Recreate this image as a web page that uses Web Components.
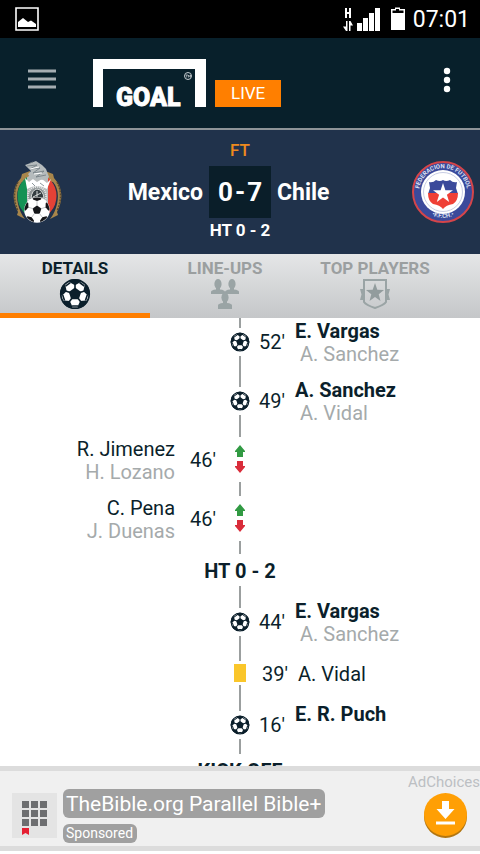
<!DOCTYPE html>
<html lang="en">
<head>
<meta charset="utf-8">
<meta name="viewport" content="width=device-width, initial-scale=1">
<title>Goal Live</title>
<style>
  html, body { height: 100%; }
  body {
    margin: 0;
    background: #fff;
    color: #0b1f2b;
    font-family: Roboto, "Liberation Sans", sans-serif;
    overflow: hidden;
  }
</style>
</head>
<body>
<goal-app></goal-app>

<script>
class GoalElement extends HTMLElement {
  constructor() {
    super();
    this.attachShadow({ mode: 'open' });
  }

  connectedCallback() {
    this.shadowRoot.innerHTML = this.render();
  }
}

const TURNS = [0, 72, 144, 216, 288];

class SoccerBall extends GoalElement {
  render() {
    const dark = '#0b1f2b';
    const parts = TURNS.map(a => `
      <g transform="rotate(${a})">
        <path d="M0-5V-10" stroke="${dark}" stroke-width="1.6"/>
        <path d="M0-8.800L-5-11.600-6.200-16H6.200L5-11.600Z" fill="${dark}"/>
        <path d="M4.600-11.500L9.400-8" stroke="${dark}" stroke-width="1.600"/>
      </g>`).join('');
    return `
      <style>
        :host { display: block; width: var(--ball, 20px); height: var(--ball, 20px); }
        svg { display: block; width: 100%; height: 100%; }
      </style>
      <svg viewBox="-16 -16 32 32" aria-hidden="true">
        <defs><clipPath id="rim"><circle r="15"/></clipPath></defs>
        <circle r="14.500" fill="#fff"/>
        <path d="M0-6.500L6.200-2 3.800 5.300H-3.800L-6.200-2Z" fill="${dark}"/>
        <g clip-path="url(#rim)">${parts}</g>
        <circle r="14.200" fill="none" stroke="${dark}" stroke-width="1.800"/>
      </svg>`;
  }
}

class StatusBar extends GoalElement {
  render() {
    return `
      <style>
        :host { display: flex; align-items: center; height: 38px; padding: 0 10px 0 15px; background: #000; color: #fff; }
        .right { display: flex; align-items: center; margin-left: auto; }
        svg { display: block; }
        time { margin-left: 8px; padding-top: 2px; font-size: 23px; line-height: 28px; }
      </style>
      <svg width="24" height="24" viewBox="0 0 24 24" aria-hidden="true">
        <path d="M1 1H23V23H1Z" fill="none" stroke="#fff" stroke-width="1.6"/>
        <path d="M3 20V15L8 11 13 15 16 13.5 21 17V20Z" fill="#fff"/>
      </svg>
      <div class="right">
        <svg width="62" height="26" viewBox="0 0 62 26" fill="#fff" aria-hidden="true">
          <path d="M2 2H4V6H6V2H8V12H6V8H4V12H2Z"/>
          <path d="M3 15H4.500V25H3L0 20.500H3ZM6 15H7.500L10 19.500H7.500V25H6Z"/>
          <path d="M14 17H19V25H14ZM20 12H25V25H20ZM26 7H31V25H26ZM32 2H37V25H32Z"/>
          <path d="M48 3H52V1.500H57V3H62V24H48Z"/>
          <path d="M49.500 4.500H53V3H56V4.500H60.500V7H49.500Z" fill="#000"/>
        </svg>
        <time>07:01</time>
      </div>`;
  }
}

class AppHeader extends GoalElement {
  render() {
    return `
      <style>
        :host { display: flex; align-items: flex-start; height: 69px; padding: 21px 20px 0 28px; background: #08202b; border-bottom: 2px solid #8e9498; }
        button { padding: 0; border: 0; background: none; cursor: pointer; }
        svg { display: block; }
        .menu { margin-top: 9px; }
        .logo { margin-left: 37px; }
        .live { margin: 21px 0 0 9px; padding: 0 16px; background: #ff7f00; color: #fff; font-size: 17px; line-height: 27px; text-decoration: none; }
        .more { margin: 6px 0 0 auto; }
      </style>
      <button class="menu" aria-label="Menu">
        <svg width="28" height="24" viewBox="0 0 28 24"><path d="M0 3H28M0 11H28M0 19H28" stroke="#a5adb2" stroke-width="3"/></svg>
      </button>
      <svg class="logo" width="113" height="52" viewBox="0 0 113 52" fill="#fff">
        <path d="M0 48V0H113V48H102V10H10V48Z"/>
        <text x="23" y="47" font-family="Roboto, sans-serif" font-size="25" font-weight="900" stroke="#fff" stroke-width=".8">GOAL</text>
        <circle cx="95" cy="17" r="3.500" fill="none" stroke="#c5ccd0"/>
        <path d="M92.500 16H95M93.700 16V18.500M95.500 18.500V16L96.500 17.500 97.500 16V18.500" stroke="#c5ccd0" stroke-width=".7" fill="none"/>
      </svg>
      <a class="live" href="#live">LIVE</a>
      <button class="more" aria-label="More options">
        <svg width="26" height="30" viewBox="0 0 26 30" fill="#fff"><circle cx="13" cy="6" r="3.200"/><circle cx="13" cy="15" r="3.200"/><circle cx="13" cy="24" r="3.200"/></svg>
      </button>`;
  }
}

class MexicoCrest extends GoalElement {
  render() {
    const patches = TURNS.map(a => `
      <g transform="rotate(${a})">
        <path d="M0-4V-9" stroke="#b9bcbe" stroke-width=".8"/>
        <path d="M0-9L-4-10.500-5-14H5L4-10.500Z"/>
      </g>`).join('');
    return `
      <style>
        :host { display: block; }
        svg { display: block; }
      </style>
      <svg width="50" height="62" viewBox="0 0 50 62" role="img" aria-label="Mexico">
        <defs>
          <clipPath id="rim"><circle r="12.500"/></clipPath>
          <clipPath id="oval"><ellipse cx="24" cy="35" rx="19.500" ry="22"/></clipPath>
        </defs>
        <path d="M9 13L17 10V20L9 21Q2 29 5 43 7 52 12 58L4 54 5 51Q-5 31 8 17Z" fill="#a8864b"/>
        <path d="M40 13L32 10V20L40 21Q47 29 44 43 42 52 37 58L45 54 44 51Q54 31 41 17Z" fill="#a8864b"/>
        <path d="M5 21Q-2 34 5 50M44 21Q51 34 44 50" fill="none" stroke="#5a4a30" stroke-width="1.500" stroke-dasharray="2 1"/>
        <g clip-path="url(#oval)">
          <path d="M4 12H14V58H4Z" fill="#149254"/>
          <path d="M14 12H35V58H14Z" fill="#b9bcbc"/>
          <path d="M35 12H45V58H35Z" fill="#e44236"/>
        </g>
        <path d="M12 17L16 21 20 18 24 21 29 18 34 22 38 18 34 28Q24 22 14 28Z" fill="#fff"/>
        <path d="M12 4L23 0 29 4 33 8 36 16 33 19 18 18 15 13 18 10Z" fill="#b5bbbd"/>
        <path d="M14 5L24 4 17 8 27 7 20 12 31 10 23 16 33 14M19 22L22 25M27 22L31 25M17 2L20 1" fill="none" stroke="#707b82" stroke-width=".8"/>
        <path d="M17 8L26 6M21 13L29 12M17 23L20 21 23 23 27 21" fill="none" stroke="#fff"/>
        <circle cx="24" cy="35" r="9" fill="#8e9495"/>
        <circle cx="24" cy="35" r="9" fill="none" stroke="#e6e8e8" stroke-width="2" stroke-dasharray="1 1"/>
        <path d="M18 37Q19 29 24 28 30 29 31 37ZM24 30V38M20 36L28 32" fill="#333c40" stroke="#d8dbda"/>
        <g transform="translate(24 49)" fill="#151619">
          <circle r="12.800" fill="#fff"/>
          <path d="M0-4.600L4.400-1.400 2.700 3.700H-2.700L-4.400-1.400Z"/>
          <g clip-path="url(#rim)">${patches}</g>
        </g>
      </svg>`;
  }
}

class ChileCrest extends GoalElement {
  render() {
    return `
      <style>
        :host { display: block; }
        svg { display: block; }
        text { font: bold 6px Roboto, sans-serif; fill: #dfe2f2; }
      </style>
      <svg width="62" height="62" viewBox="0 0 62 62" role="img" aria-label="Chile">
        <defs>
          <path id="top" d="M7.500 36A24 24 0 1 1 54.500 36"/>
          <path id="bottom" d="M14 50.500A26 26 0 0 0 48 50.500"/>
        </defs>
        <circle cx="31" cy="31" r="30" fill="#3b4a9b" stroke="#d5454a" stroke-width="2"/>
        <circle cx="31" cy="31" r="22" fill="#fff"/>
        <circle cx="31" cy="31" r="19.500" fill="none" stroke="#c8cde4" stroke-width="1"/>
        <path d="M17 21Q21 22 24 19 28 21 31 19 34 21 38 19 41 22 45 21L44 27 46 33H16L18 27Z" fill="#3b4a9b"/>
        <path d="M16 32H46Q46 40 41 43 34 44 31 48 28 44 21 43 16 40 16 32Z" fill="#ef4036"/>
        <path d="M31 22L33.400 29.300H41L34.900 33.800 37.200 41 31 36.500 24.800 41 27.100 33.800 21 29.300H28.600Z" fill="#fff"/>
        <text><textPath href="#top" startOffset="50%" text-anchor="middle">FEDERACION DE FUTBOL</textPath></text>
        <text><textPath href="#bottom" startOffset="50%" text-anchor="middle">•F.F.CH.•</textPath></text>
      </svg>`;
  }
}

class MatchScore extends GoalElement {
  render() {
    return `
      <style>
        :host { display: flex; align-items: center; justify-content: space-between; height: 124px; padding: 0 6px 0 13px; background: #20324b; color: #fff; }
        .centre { flex: 1; display: flex; flex-direction: column; align-items: center; margin-left: 5px; padding-bottom: 2px; font-weight: 500; }
        .status { color: #ee8a1d; font-size: 17px; line-height: 20px; }
        .half { font-size: 17px; font-weight: 700; line-height: 24px; }
        .line { display: grid; grid-template-columns: 1fr auto 1fr; align-items: center; column-gap: 6px; width: 100%; margin-top: 6px; font-size: 23px; font-weight: 700; }
        .home { text-align: right; }
        .score { display: flex; justify-content: center; gap: 2px; min-width: 62px; background: #0a1e29; font-size: 26px; line-height: 52px; }
      </style>
      <mexico-crest></mexico-crest>
      <div class="centre">
        <div class="status">FT</div>
        <div class="line">
          <span class="home">Mexico</span>
          <span class="score"><span>0</span><span>-</span><span>7</span></span>
          <span class="away">Chile</span>
        </div>
        <div class="half">HT 0 - 2</div>
      </div>
      <chile-crest></chile-crest>`;
  }
}

class MatchTabs extends GoalElement {
  render() {
    return `
      <style>
        :host { display: block; }
        nav { display: grid; grid-template-columns: 5fr 5fr 5fr 1fr; height: 64px; background: linear-gradient(#e5e6e7, #c5c7c9); }
        button { display: flex; flex-direction: column; align-items: center; padding: 4px 0 0; border: 0; border-bottom: 5px solid transparent; background: none; color: #9b9fa0; font: 700 17px/20px Roboto, sans-serif; cursor: pointer; }
        .active { border-color: #ff7f00; color: #0b1f2b; }
        soccer-ball { --ball: 32px; }
        svg { display: block; }
      </style>
      <nav>
        <button class="active">DETAILS<soccer-ball></soccer-ball></button>
        <button>LINE-UPS
          <svg width="30" height="32" viewBox="0 0 30 32" fill="#9aa4a5" aria-hidden="true">
            <g id="man"><ellipse cx="8" cy="6" rx="3.600" ry="5"/><path d="M6 9H10V11.500Q15 12 15 14V16H1V14Q1 12 6 11.500Z"/></g>
            <use href="#man" x="14"/>
            <ellipse cx="15" cy="19.500" rx="3.600" ry="4.800"/><path d="M13 22H17V25Q22 25.500 22 27.500V31H8V27.500Q8 25.500 13 25Z"/>
          </svg>
        </button>
        <button>TOP PLAYERS
          <svg width="30" height="32" viewBox="0 0 30 32" aria-hidden="true">
            <path d="M4 2H26V24Q24 27 15 30 6 27 4 24Z" fill="none" stroke="#9aa4a5" stroke-width="2"/>
            <path d="M0 11H3V22H0L1.500 16.500ZM30 11H27V22H30L28.500 16.500Z" fill="#9aa4a5"/>
            <path d="M15 5L17.300 11.700 24 12 18.700 16.200 20.500 23 15 19 9.500 23 11.300 16.200 6 12 12.700 11.700Z" fill="#929c9d"/>
          </svg>
        </button>
      </nav>`;
  }
}

class MatchEvent extends GoalElement {
  icon() {
    switch (this.getAttribute('kind')) {
      case 'goal':
        return '<soccer-ball></soccer-ball>';
      case 'sub':
        return `<svg width="10" height="29" viewBox="0 0 10 29" aria-hidden="true">
          <path d="M5 0L10 6V7H8V12H2V7H0V6Z" fill="#319a43"/>
          <path d="M2 16H8V21H10V22L5 28 0 22V21H2Z" fill="#d92c3a"/></svg>`;
      case 'card':
        return '<div class="yellow"></div>';
      default:
        return '<slot></slot>';
    }
  }

  render() {
    const minute = this.getAttribute('minute');
    const time = minute ? `<span class="time">${minute}'</span>` : '';
    const names = minute ? '<div class="names"><slot></slot><slot name="other"></slot></div>' : '';
    return `
      <style>
        :host { display: grid; grid-template-columns: 1fr auto 1fr; height: 59px; font-size: 20px; line-height: 23px; }
        .track { grid-column: 2; grid-row: 1; display: flex; flex-direction: column; align-items: center; min-width: 20px; }
        .track::before, .track::after { content: ""; flex: 1; width: 2px; background: #9b9f9f; }
        .mark { padding: 4px 0; }
        .side { grid-column: 3; grid-row: 1; display: flex; align-items: center; gap: 10px; padding: 2px 0 0 9px; white-space: nowrap; }
        .names { display: flex; flex-direction: column; height: 46px; }
        ::slotted([slot="other"]) { padding: 0 5px; color: #a5aaab; font-weight: 400; }
        :host([kind="goal"]) .names { font-weight: 700; }
        :host([kind="sub"]) .mark { padding: 8px 0; }
        :host([kind="card"]), :host([kind="period"]) { height: 44px; }
        :host([kind="card"]) .names { height: auto; }
        :host([kind="card"]) .mark { padding: 3px 0; }
        :host([kind="card"]) .side { padding-left: 12px; }
        :host([kind="period"]) .mark { padding: 6px 0 3px; font-weight: 700; }
        :host([side="home"]) .side { grid-column: 1; flex-direction: row-reverse; gap: 15px; padding: 2px 14px 0 0; }
        :host([side="home"]) .names { align-items: flex-end; }
        :host([side="home"]) ::slotted([slot="other"]) { padding: 0; }
        :host([last]) .track::before, :host([last]) .track::after { display: none; }
        .yellow { width: 12px; height: 18px; background: #fac62a; }
        svg { display: block; }
      </style>
      <div class="track"><div class="mark">${this.icon()}</div></div>
      ${minute ? `<div class="side">${time}${names}</div>` : ''}`;
  }
}

class MatchTimeline extends GoalElement {
  render() {
    return `
      <style>
        :host { display: block; overflow: hidden; background: #fff; }
        .list { margin-top: -6px; }
      </style>
      <div class="list">
        <match-event kind="goal" minute="52"><span>E. Vargas</span><span slot="other">A. Sanchez</span></match-event>
        <match-event kind="goal" minute="49"><span>A. Sanchez</span><span slot="other">A. Vidal</span></match-event>
        <match-event kind="sub" side="home" minute="46"><span>R. Jimenez</span><span slot="other">H. Lozano</span></match-event>
        <match-event kind="sub" side="home" minute="46"><span>C. Pena</span><span slot="other">J. Duenas</span></match-event>
        <match-event kind="period">HT 0 - 2</match-event>
        <match-event kind="goal" minute="44"><span>E. Vargas</span><span slot="other">A. Sanchez</span></match-event>
        <match-event kind="card" minute="39"><span>A. Vidal</span></match-event>
        <match-event kind="goal" minute="16"><span>E. R. Puch</span></match-event>
        <match-event kind="period" last>KICK OFF</match-event>
      </div>`;
  }
}

class AdBanner extends GoalElement {
  render() {
    return `
      <style>
        :host { display: flex; height: 75px; margin-bottom: 3px; padding-left: 12px; border: solid #dcdcdc; border-width: 5px 0; background: #f0f0f0; }
        svg { display: block; }
        .thumb { margin-top: 22px; }
        .copy { flex: 1; display: flex; flex-direction: column; align-items: flex-start; gap: 6px; margin: 18px 0 0 6px; color: #fff; white-space: nowrap; }
        .copy a, .copy span { padding: 0 4px 0 3px; border-radius: 6px; background: #a0a0a0; }
        .copy a { padding-top: 2px; color: inherit; font-size: 21px; line-height: 27px; text-decoration: none; }
        .copy span { font-size: 14px; line-height: 19px; }
        .actions { display: flex; flex-direction: column; align-items: flex-end; }
        .choices { color: #bcbfc3; font-size: 15px; line-height: 22px; text-decoration: none; }
        button { margin-right: 13px; padding: 0; border: 0; background: none; cursor: pointer; }
      </style>
      <svg class="thumb" width="45" height="45" viewBox="0 0 45 45" aria-hidden="true">
        <path d="M0 0H45V45H0Z" fill="#e4e4e4"/>
        <path d="M10 8H17V15H10ZM19 8H26V15H19ZM28 8H35V15H28ZM10 17H17V24H10ZM19 17H26V24H19ZM28 17H35V24H28ZM10 26H17V33H10ZM19 26H26V33H19ZM28 26H35V33H28Z" fill="#6d6e70"/>
        <path d="M10 35H17V42L13.500 40 10 42Z" fill="#e51f32"/>
      </svg>
      <div class="copy">
        <a href="#ad">TheBible.org Parallel Bible+</a>
        <span>Sponsored</span>
      </div>
      <div class="actions">
        <a class="choices" href="#adchoices">AdChoices</a>
        <button aria-label="Download">
          <svg width="43" height="45" viewBox="0 0 43 45">
            <circle cx="21.500" cy="23.500" r="21.500" fill="#b27611"/>
            <circle cx="21.500" cy="21.500" r="21.500" fill="#ff9f05"/>
            <path d="M18 8H25V16H30.500L21.500 26 12.500 16H18ZM12 28.500H31V31.500H12Z" fill="#fff"/>
          </svg>
        </button>
      </div>`;
  }
}

class GoalApp extends GoalElement {
  render() {
    return `
      <style>
        :host { display: flex; flex-direction: column; height: 100vh; }
        match-timeline { flex: 1; min-height: 0; }
      </style>
      <status-bar></status-bar>
      <app-header></app-header>
      <match-score></match-score>
      <match-tabs></match-tabs>
      <match-timeline></match-timeline>
      <ad-banner></ad-banner>`;
  }
}

customElements.define('soccer-ball', SoccerBall);
customElements.define('status-bar', StatusBar);
customElements.define('app-header', AppHeader);
customElements.define('mexico-crest', MexicoCrest);
customElements.define('chile-crest', ChileCrest);
customElements.define('match-score', MatchScore);
customElements.define('match-tabs', MatchTabs);
customElements.define('match-event', MatchEvent);
customElements.define('match-timeline', MatchTimeline);
customElements.define('ad-banner', AdBanner);
customElements.define('goal-app', GoalApp);
</script>
</body>
</html>
